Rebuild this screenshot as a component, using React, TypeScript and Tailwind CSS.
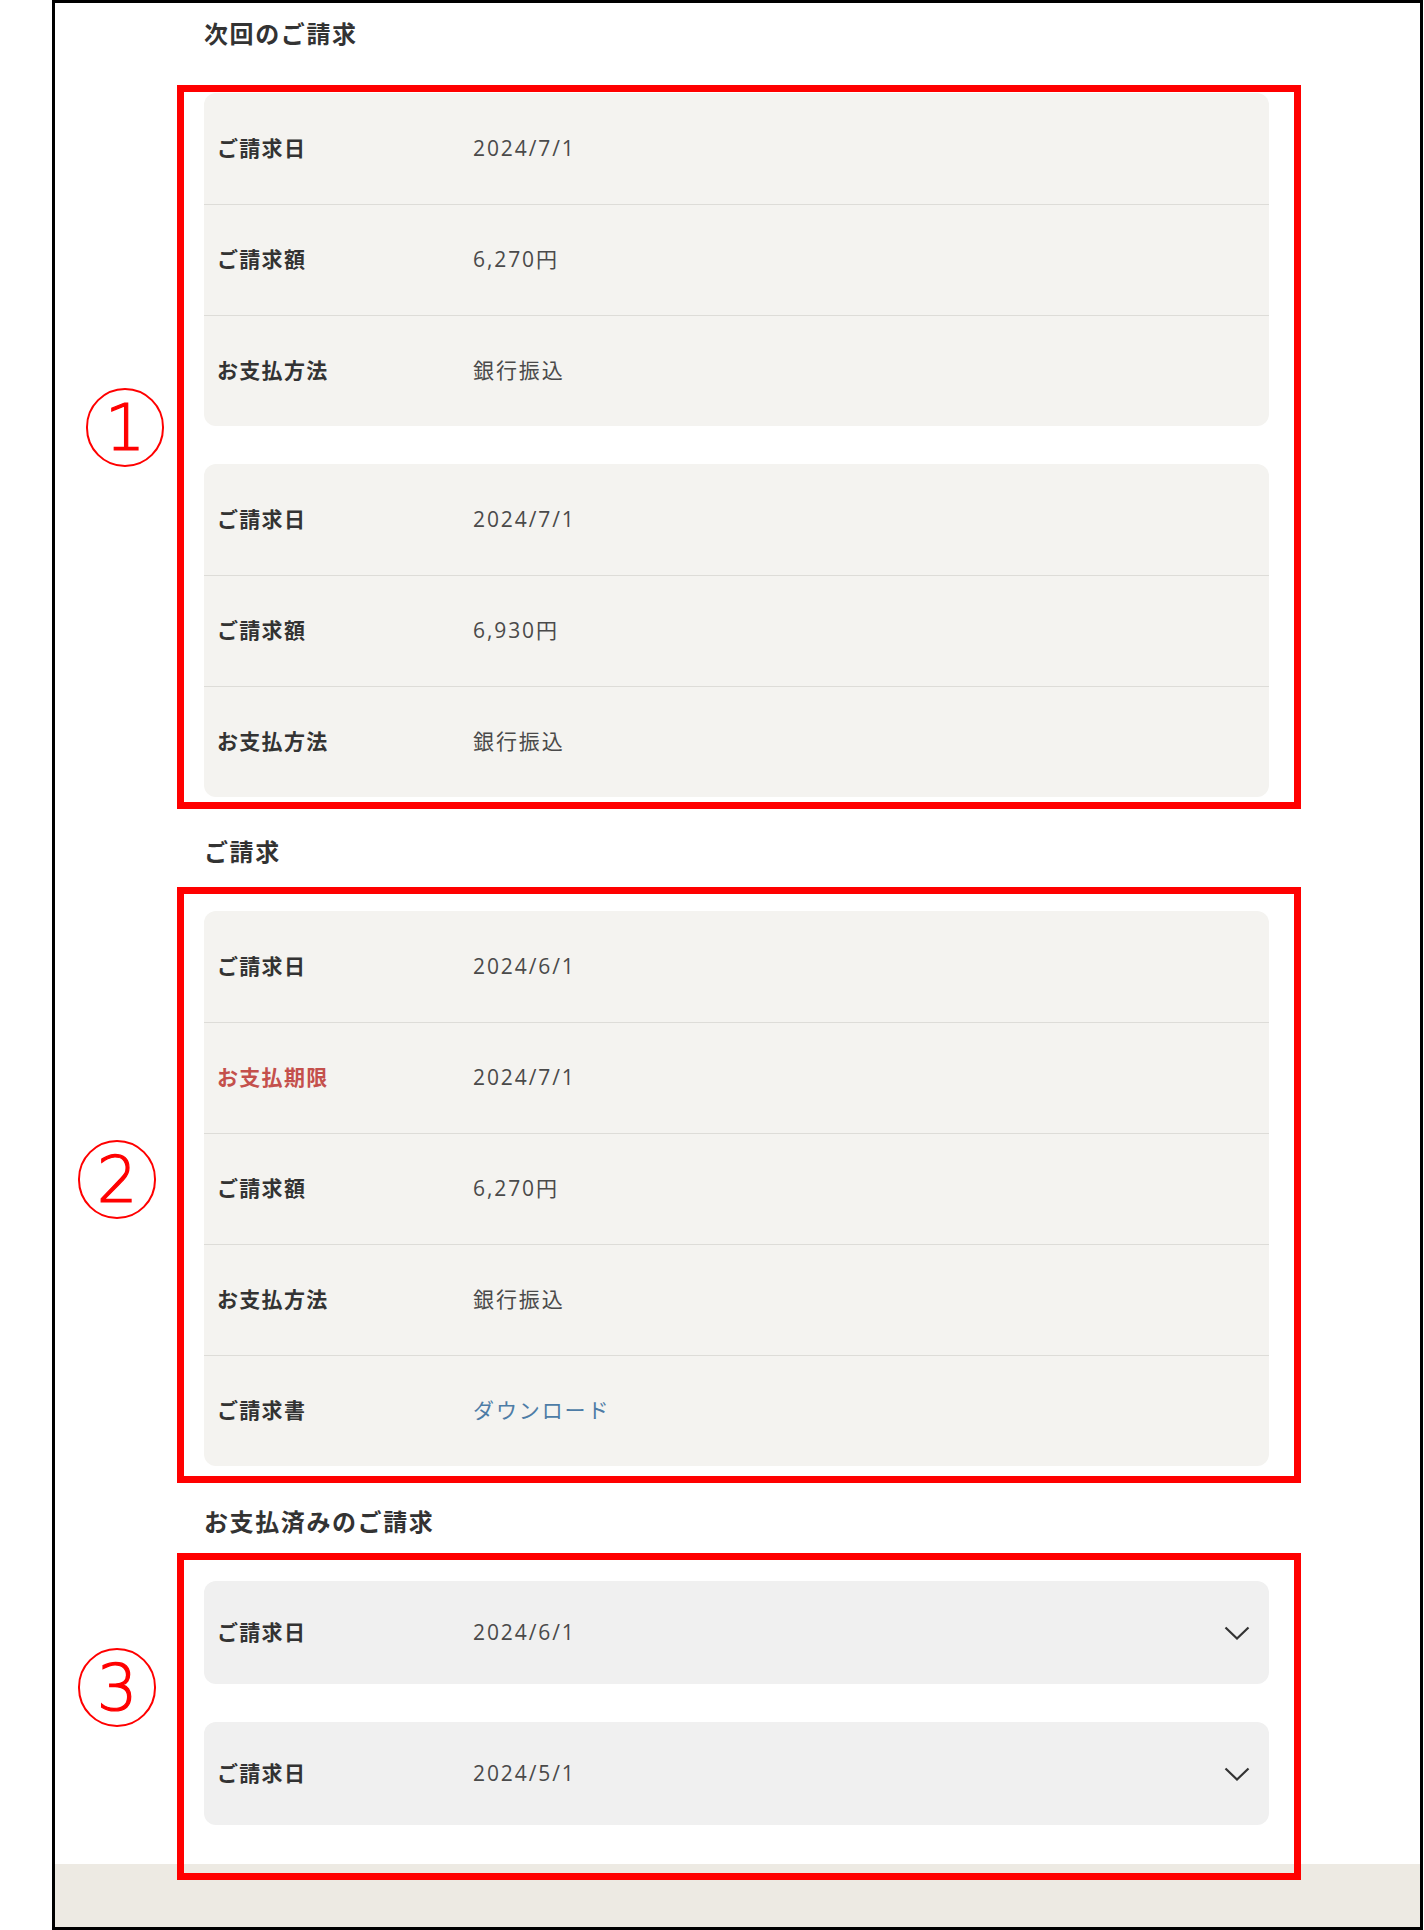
import type { ReactNode } from "react"

const jp = "font-['Open_Sans','Noto_Sans_CJK_JP',sans-serif]"

type RowProps = { label: string; value: ReactNode; alert?: boolean; link?: boolean }

function Row({ label, value, alert, link }: RowProps) {
  return (
    <div className="flex h-[111px] items-center border-t border-[#dddcd8] pl-[13px] first:border-t-0">
      <div className={`w-[256px] text-[21px] font-bold tracking-[1.3px] ${alert ? "text-[#c4504c]" : "text-[#333333]"}`}>
        {label}
      </div>
      <div className={`text-[21px] tracking-[1.9px] ${link ? "text-[#4d7ca6]" : "text-[#4a4a4a]"}`}>{value}</div>
    </div>
  )
}

function Card({ children }: { children: ReactNode }) {
  return <div className="rounded-[12px] bg-[#f4f3f0]">{children}</div>
}

function Fold({ date }: { date: string }) {
  return (
    <div className="flex h-[103px] items-center rounded-[12px] bg-[#f0f0f0] pl-[13px] pr-[19px]">
      <div className="w-[256px] text-[21px] font-bold tracking-[1.3px] text-[#333333]">ご請求日</div>
      <div className="text-[21px] tracking-[1.9px] text-[#4a4a4a]">{date}</div>
      <svg className="ml-auto" width="26" height="14" viewBox="0 0 26 14" fill="none">
        <polyline points="1.5,1.5 13,12.5 24.5,1.5" stroke="#333333" strokeWidth="2.2" />
      </svg>
    </div>
  )
}

function Marked({ mark, markClass, className, children }: { mark: string; markClass: string; className: string; children: ReactNode }) {
  return (
    <div className={`relative z-10 -ml-[27px] -mr-[32px] border-[7px] border-[#ff0000] pl-[20px] pr-[25px] ${className}`}>
      <span
        className={`absolute flex h-[79px] w-[78px] items-center justify-center rounded-full border-2 border-[#ff0000] font-['DejaVu_Sans',sans-serif] text-[64px] font-extralight leading-none text-[#ff0000] [-webkit-text-stroke:1.2px_#ff0000] ${markClass}`}
      >
        {mark}
      </span>
      {children}
    </div>
  )
}

function Heading({ children, className }: { children: ReactNode; className?: string }) {
  return <h2 className={`text-[24px] font-bold leading-[32px] tracking-[1.6px] text-[#333333] ${className ?? ""}`}>{children}</h2>
}

export default function App() {
  return (
    <div className={`min-h-[1930px] bg-white ${jp}`}>
      <div className="ml-[52px] flex h-[1930px] w-[1371px] flex-col border-[3px] border-black">
        <main className="min-h-0 flex-1 pl-[149px] pr-[151px] pt-[15px]">
          <Heading>次回のご請求</Heading>
          <Marked mark="1" markClass="-left-[98px] top-[296px]" className="mt-[35px] pb-[5px] pt-[1px]">
            <div className="flex flex-col gap-[38px]">
              <Card>
                <Row label="ご請求日" value="2024/7/1" />
                <Row label="ご請求額" value="6,270円" />
                <Row label="お支払方法" value="銀行振込" />
              </Card>
              <Card>
                <Row label="ご請求日" value="2024/7/1" />
                <Row label="ご請求額" value="6,930円" />
                <Row label="お支払方法" value="銀行振込" />
              </Card>
            </div>
          </Marked>

          <Heading className="mt-[27px]">ご請求</Heading>
          <Marked mark="2" markClass="-left-[106px] top-[246px]" className="mt-[19px] pb-[10px] pt-[17px]">
            <Card>
              <Row label="ご請求日" value="2024/6/1" />
              <Row label="お支払期限" value="2024/7/1" alert />
              <Row label="ご請求額" value="6,270円" />
              <Row label="お支払方法" value="銀行振込" />
              <Row label="ご請求書" value="ダウンロード" link />
            </Card>
          </Marked>

          <Heading className="mt-[23px]">お支払済みのご請求</Heading>
          <Marked mark="3" markClass="-left-[106px] top-[88px]" className="mt-[15px] pb-[48px] pt-[21px]">
            <div className="flex flex-col gap-[38px]">
              <Fold date="2024/6/1" />
              <Fold date="2024/5/1" />
            </div>
          </Marked>
        </main>
        <footer className="h-[63px] shrink-0 bg-[#edeae3]" />
      </div>
    </div>
  )
}
